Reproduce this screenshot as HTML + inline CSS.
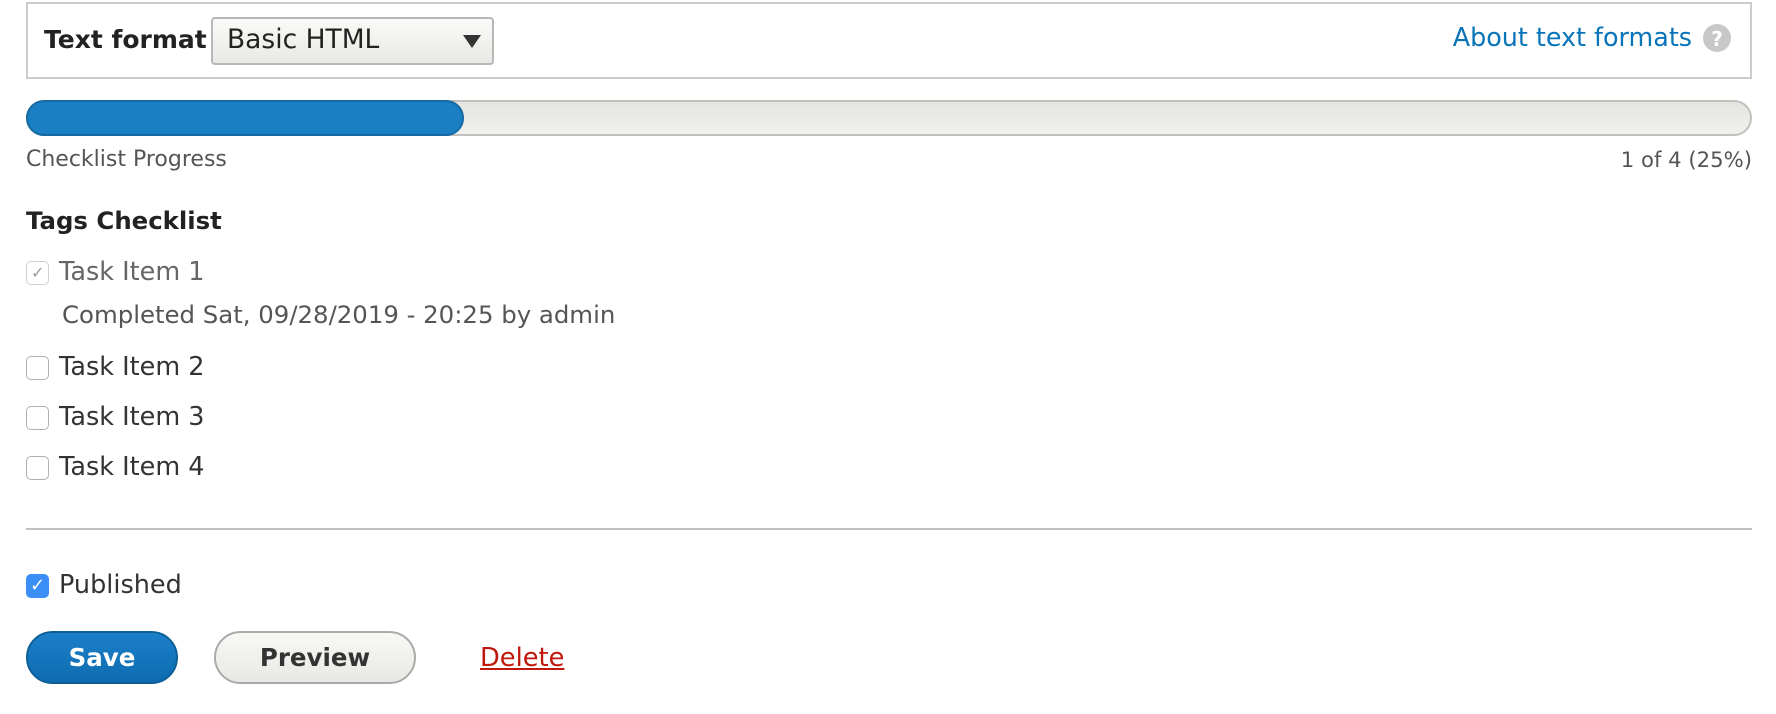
<!DOCTYPE html>
<html><head><meta charset="utf-8"><style>
*{margin:0;padding:0;box-sizing:border-box}
body{width:1776px;height:714px;background:#fff;font-family:"DejaVu Sans","Liberation Sans",sans-serif;color:#333;position:relative;overflow:hidden}
.a{position:absolute;white-space:nowrap;line-height:30px}
.box{position:absolute;left:26px;top:2px;width:1726px;height:77px;border:2px solid #ccc}
.sel{position:absolute;left:211px;top:17px;width:283px;height:48px;border:2px solid #b8b8b8;border-radius:4px;background:linear-gradient(#fafaf8,#e8e8e4)}
.bar{position:absolute;left:26px;top:100px;width:1726px;height:36px;border-radius:18px;background:linear-gradient(#e4e4e0,#f0f0ee);border:2px solid #c0c0bc}
.fill{position:absolute;left:26px;top:100px;width:438px;height:36px;border-radius:18px;background:#1a7fc3;border:2px solid #1669a4}
.cb{position:absolute;left:26px;width:23px;height:24px;border:1.5px solid #b0b0b0;border-radius:5px;background:#fff}
.lbl{font-size:25.5px;left:59px}
.btn{position:absolute;top:631px;height:53px;border-radius:27px;font-weight:bold;font-size:24.5px;text-align:center;line-height:49px}
</style></head><body>
<div class="box"></div>
<div class="a" style="left:44px;top:25px;font-size:25px;font-weight:bold;color:#222">Text format</div>
<div class="sel"></div>
<div class="a" style="left:227px;top:25px;font-size:26.5px;color:#222">Basic HTML</div>
<svg class="a" style="left:463px;top:35px" width="18" height="13"><path d="M0 0H18L9 13Z" fill="#333"/></svg>
<div class="a" style="right:84px;top:22px;font-size:25.4px;color:#0a74b9">About text formats</div>
<svg class="a" style="left:1702px;top:23px" width="30" height="30"><circle cx="15" cy="15" r="14" fill="#c8c8c8"/><text x="15" y="23" text-anchor="middle" font-family="DejaVu Sans" font-weight="bold" font-size="20" fill="#fff">?</text></svg>
<div class="bar"></div><div class="fill"></div>
<div class="a" style="left:26px;top:145px;font-size:22px;color:#555">Checklist Progress</div>
<div class="a" style="right:24px;top:145px;font-size:21.2px;color:#555">1 of 4 (25%)</div>
<div class="a" style="left:26px;top:206px;font-size:24.4px;font-weight:bold;color:#222">Tags Checklist</div>
<div class="cb" style="top:261px;border-color:#d0d0d0"></div>
<div class="a" style="left:31px;top:258px;font-size:16px;color:#999">✓</div>
<div class="a lbl" style="top:257px;color:#666">Task Item 1</div>
<div class="a" style="left:62px;top:300px;font-size:24.4px;color:#555">Completed Sat, 09/28/2019 - 20:25 by admin</div>
<div class="cb" style="top:356px"></div><div class="a lbl" style="top:352px">Task Item 2</div>
<div class="cb" style="top:406px"></div><div class="a lbl" style="top:402px">Task Item 3</div>
<div class="cb" style="top:456px"></div><div class="a lbl" style="top:452px">Task Item 4</div>
<div class="a" style="left:26px;top:528px;width:1726px;height:2px;background:#c0c0bc"></div>
<div class="cb" style="top:574px;background:#3a8ef5;border-color:#3a8ef5"></div>
<div class="a" style="left:30px;top:571px;font-size:18px;color:#fff;font-weight:bold">✓</div>
<div class="a lbl" style="top:570px">Published</div>
<div class="btn" style="left:26px;width:152px;background:linear-gradient(#1a7fc9,#0f6cb0);border:2px solid #0d5f98;color:#fff">Save</div>
<div class="btn" style="left:214px;width:202px;background:linear-gradient(#f8f8f6,#e8e8e3);border:2px solid #aaa;color:#333">Preview</div>
<div class="a" style="left:480px;top:643px;font-size:25.7px;color:#c0180c;text-decoration:underline">Delete</div>
</body></html>
